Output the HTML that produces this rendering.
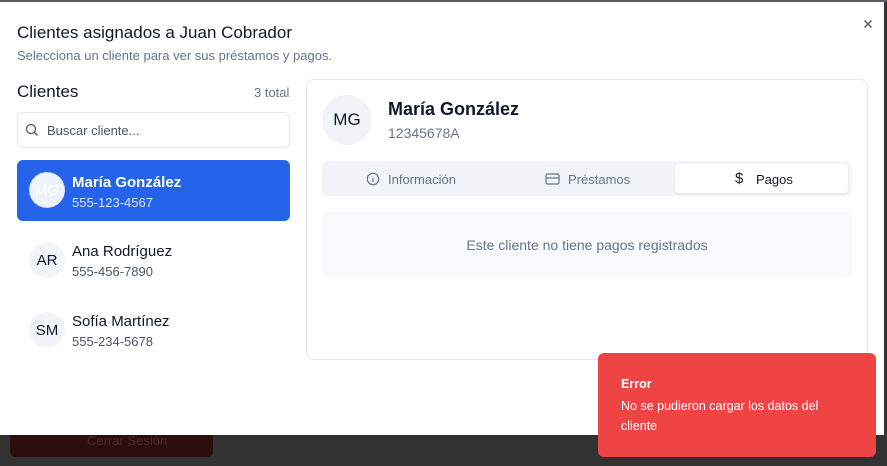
<!DOCTYPE html>
<html><head><meta charset="utf-8"><style>
*{box-sizing:border-box;margin:0;padding:0}
body{width:887px;height:466px;overflow:hidden;background:#323232;font-family:"Liberation Sans",sans-serif;position:relative;color:#0f172a}
.abs{position:absolute}
.dlg{left:0;top:2px;width:884px;height:433px;background:#fff}
.av{position:absolute;border-radius:50%;background:#f1f5f9;display:flex;align-items:center;justify-content:center;color:#0f172a}
</style></head><body>
<div class="abs" style="left:0;top:0;width:887px;height:2px;background:#5a5e66"></div>
<div class="abs" style="left:10px;top:425px;width:203px;height:32px;background:#2e0d0d;border-radius:5px;color:#4a2a2a;font-size:13px;padding:8px 0 0 77px">Cerrar Sesión</div>
<div class="abs dlg"></div>
<div class="abs" style="left:17px;top:23px;font-size:17px;font-weight:500">Clientes asignados a Juan Cobrador</div>
<div class="abs" style="left:17px;top:48px;font-size:13px;color:#64748b">Selecciona un cliente para ver sus préstamos y pagos.</div>
<svg class="abs" style="left:863px;top:19px" width="10" height="10" viewBox="0 0 10 10"><path d="M1.5 1.5L8.5 8.5M8.5 1.5L1.5 8.5" stroke="#555" stroke-width="1.3"/></svg>
<div class="abs" style="left:17px;top:82px;font-size:17px;font-weight:500">Clientes</div>
<div class="abs" style="left:254px;top:85px;font-size:13px;color:#64748b">3 total</div>
<div class="abs" style="left:17px;top:112px;width:273px;height:36px;border:1px solid #e2e8f0;border-radius:6px"></div>
<svg class="abs" style="left:25px;top:123px" width="14" height="14" viewBox="0 0 14 14"><circle cx="6" cy="6" r="4.5" stroke="#555" stroke-width="1.3" fill="none"/><path d="M9.3 9.3L12.5 12.5" stroke="#555" stroke-width="1.3"/></svg>
<div class="abs" style="left:47px;top:123px;font-size:13px;color:#475569">Buscar cliente...</div>
<div class="abs" style="left:17px;top:160px;width:273px;height:61px;background:#2563eb;border-radius:6px"></div>
<div class="av" style="left:29px;top:172px;width:36px;height:36px;background:#eef2fb;border:1px dashed #c8d3ee;color:#fff;font-size:15px">MG</div>
<div class="abs" style="left:72px;top:174px;font-size:15px;font-weight:bold;color:#fff">María González</div>
<div class="abs" style="left:72px;top:195px;font-size:13px;color:#dbe4fb">555-123-4567</div>
<div class="av" style="left:29px;top:242px;width:36px;height:36px;font-size:15px">AR</div>
<div class="abs" style="left:72px;top:243px;font-size:15px;font-weight:500">Ana Rodríguez</div>
<div class="abs" style="left:72px;top:264px;font-size:13px;color:#475569">555-456-7890</div>
<div class="av" style="left:29px;top:312px;width:36px;height:36px;font-size:15px">SM</div>
<div class="abs" style="left:72px;top:313px;font-size:15px;font-weight:500">Sofía Martínez</div>
<div class="abs" style="left:72px;top:334px;font-size:13px;color:#475569">555-234-5678</div>
<div class="abs" style="left:306px;top:79px;width:562px;height:281px;border:1px solid #e2e8f0;border-radius:8px"></div>
<div class="av" style="left:322px;top:95px;width:50px;height:50px;font-size:17px">MG</div>
<div class="abs" style="left:388px;top:99px;font-size:18px;font-weight:bold">María González</div>
<div class="abs" style="left:388px;top:125px;font-size:14px;color:#64748b">12345678A</div>
<div class="abs" style="left:322px;top:161px;width:530px;height:35px;background:#f1f5f9;border-radius:6px"></div>
<div class="abs" style="left:675px;top:164px;width:173px;height:29px;background:#fff;border-radius:4px;box-shadow:0 1px 2px rgba(0,0,0,.08)"></div>
<svg class="abs" style="left:366px;top:172px" width="14" height="14" viewBox="0 0 14 14"><circle cx="7" cy="7" r="5.7" stroke="#64748b" stroke-width="1.2" fill="none"/><path d="M7 6.3V10M7 4.2v.3" stroke="#64748b" stroke-width="1.3"/></svg>
<div class="abs" style="left:388px;top:172px;font-size:13px;color:#64748b;font-weight:500">Información</div>
<svg class="abs" style="left:545px;top:173px" width="15" height="12" viewBox="0 0 15 12"><rect x="1" y="1" width="13" height="10" rx="1.5" stroke="#64748b" stroke-width="1.2" fill="none"/><path d="M1 5h13" stroke="#64748b" stroke-width="1.2"/></svg>
<div class="abs" style="left:568px;top:172px;font-size:13px;color:#64748b;font-weight:500">Préstamos</div>
<div class="abs" style="left:735px;top:170px;font-size:15px;color:#0f172a">$</div>
<div class="abs" style="left:756px;top:172px;font-size:13px;font-weight:500">Pagos</div>
<div class="abs" style="left:322px;top:212px;width:530px;height:65px;background:#f8fafc;border-radius:6px"></div>
<div class="abs" style="left:322px;top:237px;width:530px;text-align:center;font-size:14px;color:#64748b">Este cliente no tiene pagos registrados</div>
<div class="abs" style="left:598px;top:353px;width:278px;height:104px;background:#ef4444;border-radius:6px;color:#fff;padding:24px 0 0 23px">
<div style="font-size:12.5px;font-weight:bold">Error</div>
<div style="font-size:12.5px;margin-top:5px;line-height:20px;width:215px">No se pudieron cargar los datos del cliente</div>
</div>
</body></html>
